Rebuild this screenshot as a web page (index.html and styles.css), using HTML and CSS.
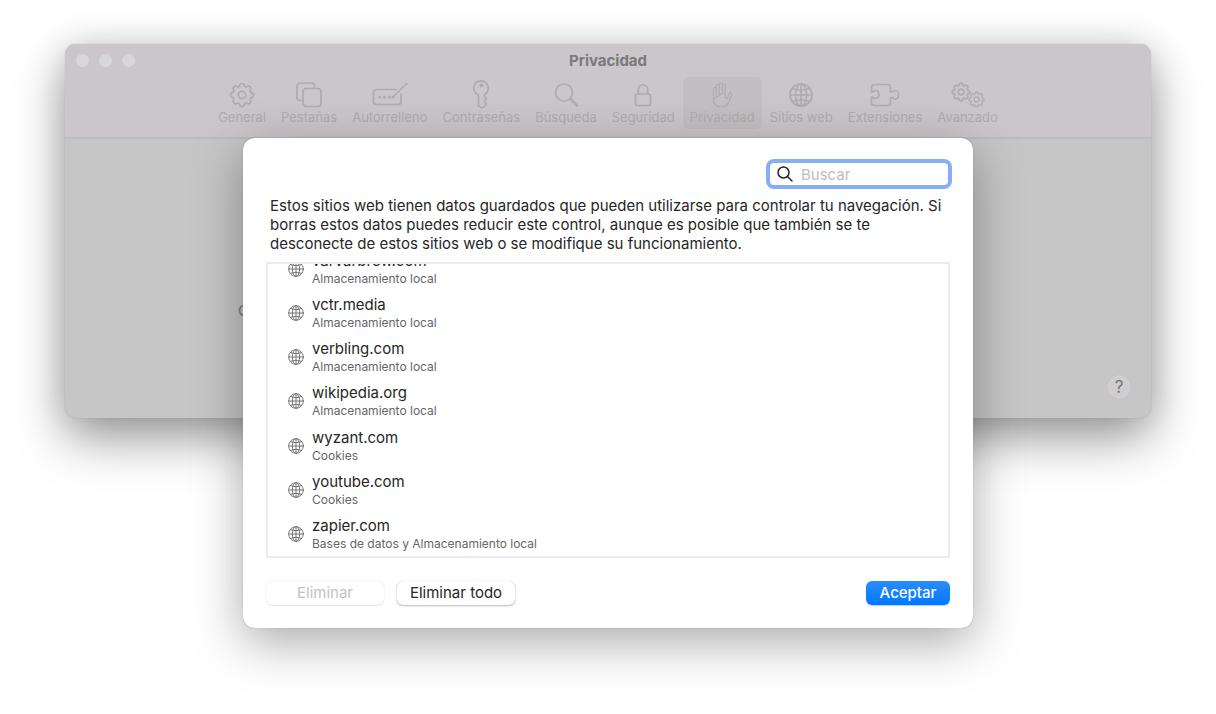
FILE: index.html
```html
<!DOCTYPE html>
<html lang="es">
<head>
<meta charset="utf-8">
<meta name="viewport" content="width=device-width, initial-scale=1">
<title>Privacidad</title>
<link rel="stylesheet" href="styles.css">
</head>
<body>
<svg class="defs" aria-hidden="true">
  <symbol id="gear" viewBox="-13 -13 26 26">
    <path d="M-2.8-8.500Q-2.200-11.500 0-11.500T2.800-8.500L4-8Q6.500-9.800 8.100-8.100T8-4L8.500-2.800Q11.500-2.200 11.500 0T8.500 2.800L8 4Q9.800 6.500 8.100 8.100T4 8L2.800 8.500Q2.200 11.500 0 11.500T-2.800 8.500L-4 8Q-6.500 9.800-8.100 8.100T-8 4L-8.500 2.800Q-11.500 2.200-11.500 0T-8.500-2.800L-8-4Q-9.800-6.500-8.100-8.100T-4-8Z"/>
    <circle r="3.7"/>
  </symbol>
  <symbol id="globe" viewBox="0 0 24 24">
    <circle cx="12" cy="12" r="11"/>
    <ellipse cx="12" cy="12" rx="5.5" ry="11"/>
    <path d="M12 1v22M1 12h22M3.500 5.500Q12 9 20.500 5.500M3.500 18.500Q12 15 20.500 18.500"/>
  </symbol>
</svg>
<main class="stage">
  <section class="window" aria-label="Preferencias">
    <header class="titlebar">
      <div class="lights"><span class="light"></span><span class="light"></span><span class="light"></span></div>
      <h1 class="title">Privacidad</h1>
    </header>
    <nav class="toolbar">
      <button class="tool" type="button"><svg class="icon" viewBox="0 0 26 26"><use href="#gear" width="26" height="26"/></svg>General</button>
      <button class="tool" type="button"><svg class="icon" viewBox="0 0 26 26"><path d="M5.500 18.500H4A3 3 0 0 1 1 15.500V4A3 3 0 0 1 4 1H15.500A3 3 0 0 1 18.500 4V6"/><rect x="7" y="6.500" width="18" height="18" rx="3"/></svg>Pestañas</button>
      <button class="tool" type="button"><svg class="icon icon-wide" viewBox="0 0 36 26"><path d="M24 7.500H4.500A3 3 0 0 0 1.500 10.500V19.500A3 3 0 0 0 4.500 22.500H26A3 3 0 0 0 29 19.500V12M21.500 14.500 32 4"/><g class="solid"><circle cx="7.500" cy="15" r="1.600"/><circle cx="12.500" cy="15" r="1.600"/><circle cx="17.500" cy="15" r="1.600"/><circle cx="34" cy="2" r="1.500"/><path d="M19.500 16.500 20.500 13 23 15.500Z"/></g></svg>Autorrelleno</button>
      <button class="tool" type="button"><svg class="icon" viewBox="0 0 26 26"><path d="M10.500 13A7.300 7.300 0 1 1 16.500 12.500V14.500L18.500 17 16 19.500 18.500 22 14.500 26 10.500 24Z"/><circle class="solid" cx="13.500" cy="3.500" r="2"/></svg>Contraseñas</button>
      <button class="tool" type="button"><svg class="icon" viewBox="0 0 26 26"><circle cx="11" cy="10.500" r="8.500"/><path class="bold" d="M17.500 17 24 23.500"/></svg>Búsqueda</button>
      <button class="tool" type="button"><svg class="icon" viewBox="0 0 26 26"><rect x="5.500" y="12" width="15" height="11.500" rx="2"/><path d="M8.300 12V7.500A4.700 4.700 0 0 1 17.700 7.500V12"/></svg>Seguridad</button>
      <button class="tool tool-active" type="button" aria-current="page"><svg class="icon icon-hand" viewBox="0 0 26 26"><path d="M4.500 17V7Q4.500 5.500 5.800 5.500T7.200 7V13M7.200 12V4Q7.200 2.500 8.700 2.500T10.200 4V12M10.200 11.500V2.500Q10.200 1 11.800 1T13.400 2.500V12M13.400 11.500V4Q13.400 2.500 14.800 2.500T16.200 4V15.500L18 16.500 20 12Q20.800 10.500 22 11T22.700 13L20 19.500Q18 25 12.500 25 4.500 25 4.500 17Z"/></svg>Privacidad</button>
      <button class="tool" type="button"><svg class="icon" viewBox="0 0 26 26"><use href="#globe" x="1" y="1" width="24" height="24"/></svg>Sitios web</button>
      <button class="tool" type="button"><svg class="icon icon-wide" viewBox="0 0 36 26"><path d="M7 2.500H21A2.500 2.500 0 0 1 23.500 5V10H25.500Q26.500 8.500 28 8.500A3.500 4 0 0 1 28 17Q26.500 17 25.500 15.500H23.500V21A2.500 2.500 0 0 1 21 23.500H7A2.500 2.500 0 0 1 4.500 21V15H6Q7 16.500 8.500 16.500A3.500 4 0 0 0 8.500 8.500Q7 8.500 6 10H4.500V5A2.500 2.500 0 0 1 7 2.500Z"/></svg>Extensiones</button>
      <button class="tool" type="button"><svg class="icon icon-wide" viewBox="0 0 36 26"><use class="small-gear" href="#gear" x="1" y="0" width="20" height="20"/><use class="small-gear" href="#gear" x="18" y="9" width="17" height="17"/></svg>Avanzado</button>
    </nav>
    <div class="pane">
      <span class="pane-label">Cookies</span>
      <button class="help" type="button" aria-label="Ayuda">?</button>
    </div>
  </section>

  <section class="dialog" role="dialog" aria-label="Datos de sitios web">
    <label class="search">
      <svg class="search-icon" viewBox="0 0 16 16" aria-hidden="true"><circle cx="6.500" cy="6.500" r="5.500"/><path d="M10.500 10.500 15 15"/></svg>
      <input class="search-input" type="search" placeholder="Buscar" aria-label="Buscar">
    </label>
    <p class="intro">Estos sitios web tienen datos guardados que pueden utilizarse para controlar tu navegación. Si borras estos datos puedes reducir este control, aunque es posible que también se te desconecte de estos sitios web o se modifique su funcionamiento.</p>
    <div class="list-box">
      <ul class="sites">
        <li class="site"><svg class="site-icon" aria-hidden="true"><use href="#globe"/></svg><span class="name">varvarbrew.com</span><span class="kind">Almacenamiento local</span></li>
        <li class="site"><svg class="site-icon" aria-hidden="true"><use href="#globe"/></svg><span class="name">vctr.media</span><span class="kind">Almacenamiento local</span></li>
        <li class="site"><svg class="site-icon" aria-hidden="true"><use href="#globe"/></svg><span class="name">verbling.com</span><span class="kind">Almacenamiento local</span></li>
        <li class="site"><svg class="site-icon" aria-hidden="true"><use href="#globe"/></svg><span class="name">wikipedia.org</span><span class="kind">Almacenamiento local</span></li>
        <li class="site"><svg class="site-icon" aria-hidden="true"><use href="#globe"/></svg><span class="name">wyzant.com</span><span class="kind">Cookies</span></li>
        <li class="site"><svg class="site-icon" aria-hidden="true"><use href="#globe"/></svg><span class="name">youtube.com</span><span class="kind">Cookies</span></li>
        <li class="site"><svg class="site-icon" aria-hidden="true"><use href="#globe"/></svg><span class="name">zapier.com</span><span class="kind">Bases de datos y Almacenamiento local</span></li>
      </ul>
    </div>
    <footer class="actions">
      <button class="btn" type="button" disabled>Eliminar</button>
      <button class="btn" type="button">Eliminar todo</button>
      <button class="btn btn-primary" type="button">Aceptar</button>
    </footer>
  </section>
</main>
</body>
</html>
```

FILE: styles.css
```css
* { box-sizing: border-box; }

body {
  margin: 0;
  min-height: 100vh;
  background: #fff;
  color: #262626;
  font-family: Inter, "Liberation Sans", sans-serif;
  font-size: 15px;
  line-height: 19px;
}

button, input { font: inherit; color: inherit; }

svg {
  fill: none;
  stroke: currentColor;
  stroke-linecap: round;
  stroke-linejoin: round;
}

.defs { position: absolute; width: 0; height: 0; }

.stage {
  position: relative;
  padding: 44px 65px 0;
}

/* Preferences window, dimmed behind the dialog */
.window {
  overflow: hidden;
  border-radius: 11px;
  background: #c6c6c6;
  box-shadow: 0 0 1px #999, 0 20px 50px rgba(0, 0, 0, 0.4), 0 0 34px rgba(0, 0, 0, 0.1);
}

.titlebar {
  display: grid;
  grid-template-columns: 1fr auto 1fr;
  align-items: center;
  height: 33px;
  padding: 0 11px;
  background: #cac6c9;
}

.lights { display: flex; gap: 10px; }

.light {
  width: 13px;
  height: 13px;
  border-radius: 50%;
  background: #d8d7d8;
}

.title {
  margin: 0;
  color: #7b797b;
  font-size: 15px;
  font-weight: 700;
}

.toolbar {
  display: flex;
  justify-content: center;
  gap: 1px;
  padding-bottom: 8px;
  border-bottom: 2px solid #bdbbbd;
  background: #cac6c9;
}

.tool {
  display: flex;
  flex-direction: column;
  align-items: center;
  gap: 1px;
  padding: 5px 7px 4px;
  border: 0;
  border-radius: 6px;
  background: none;
  color: #afabae;
  font-size: 13px;
  line-height: 16px;
}

.tool-active { background: #c1bfc1; }

.icon { width: 26px; height: 26px; stroke-width: 1.7; overflow: visible; }
.icon-wide { width: 36px; }
.icon-hand { stroke-width: 1.2; }
.icon .bold { stroke-width: 2.5; }
.icon .solid { fill: currentColor; stroke: none; }
.small-gear { stroke-width: 2.2; }

.pane {
  display: flex;
  flex-direction: column;
  gap: 54px;
  padding: 162px 20px 19px;
}

.pane-label { padding-left: 153px; line-height: 20px; color: #777; }

.help {
  align-self: flex-end;
  width: 24px;
  height: 24px;
  padding: 0;
  border: 0;
  border-radius: 50%;
  background: #d0cdd0;
  box-shadow: 0 0 1px #aaa;
  color: #737373;
  font-size: 17px;
  line-height: 24px;
}

/* Website data dialog */
.dialog {
  position: absolute;
  top: 138px;
  left: 50%;
  width: 730px;
  max-width: 100%;
  padding: 21px 23px 23px;
  transform: translateX(-50%);
  border-radius: 12px;
  background: #fff;
  box-shadow: 0 0 1px #777, 0 14px 50px rgba(0, 0, 0, 0.34);
}

.search {
  display: flex;
  align-items: center;
  gap: 8px;
  width: 186px;
  height: 30px;
  margin: 0 -2px 0 auto;
  padding: 0 7px;
  border: 4px solid #86aef6;
  border-radius: 8px;
}

.search-icon { flex: none; width: 16px; height: 16px; stroke-width: 1.5; }

.search-input {
  flex: 1;
  min-width: 0;
  padding: 0;
  border: 0;
  outline: 0;
  background: none;
  appearance: none;
}

.search-input::placeholder { color: #bdbdbd; opacity: 1; }

.intro { margin: 7px 4px 9px; }

.list-box {
  display: flex;
  align-items: flex-end;
  height: 296px;
  overflow: hidden;
  border: 2px solid #ececec;
}

.sites {
  display: grid;
  grid-auto-rows: 1fr;
  flex: 1;
  height: 310px;
  margin: 0;
  padding: 0 20px;
  list-style: none;
}

.site {
  display: grid;
  grid-template-columns: 16px 1fr;
  grid-template-rows: 20px 16px;
  column-gap: 8px;
  align-content: center;
  padding-top: 1px;
}

.site-icon {
  grid-row: 1 / 3;
  align-self: center;
  width: 16px;
  height: 16px;
  stroke-width: 1.5;
  color: #777;
}

.name { line-height: 20px; }
.kind { color: #666; font-size: 12px; line-height: 16px; }

.actions { display: flex; gap: 13px; margin-top: 23px; }

.btn {
  min-width: 118px;
  height: 24px;
  padding: 0 12px 2px;
  border: 0;
  border-radius: 6px;
  background: #fff;
  box-shadow: 0 0 1px rgba(0, 0, 0, 0.3), 0 1px 2px rgba(0, 0, 0, 0.25);
  white-space: nowrap;
}

.btn:disabled {
  color: #c2c2c2;
  box-shadow: 0 0 1px rgba(0, 0, 0, 0.2), 0 1px 1px rgba(0, 0, 0, 0.08);
}

.btn-primary {
  min-width: 84px;
  margin-left: auto;
  background: linear-gradient(#2a8cff, #0078ff);
  box-shadow: 0 1px 1px rgba(0, 90, 220, 0.3);
  color: #fff;
  font-weight: 500;
}
```
